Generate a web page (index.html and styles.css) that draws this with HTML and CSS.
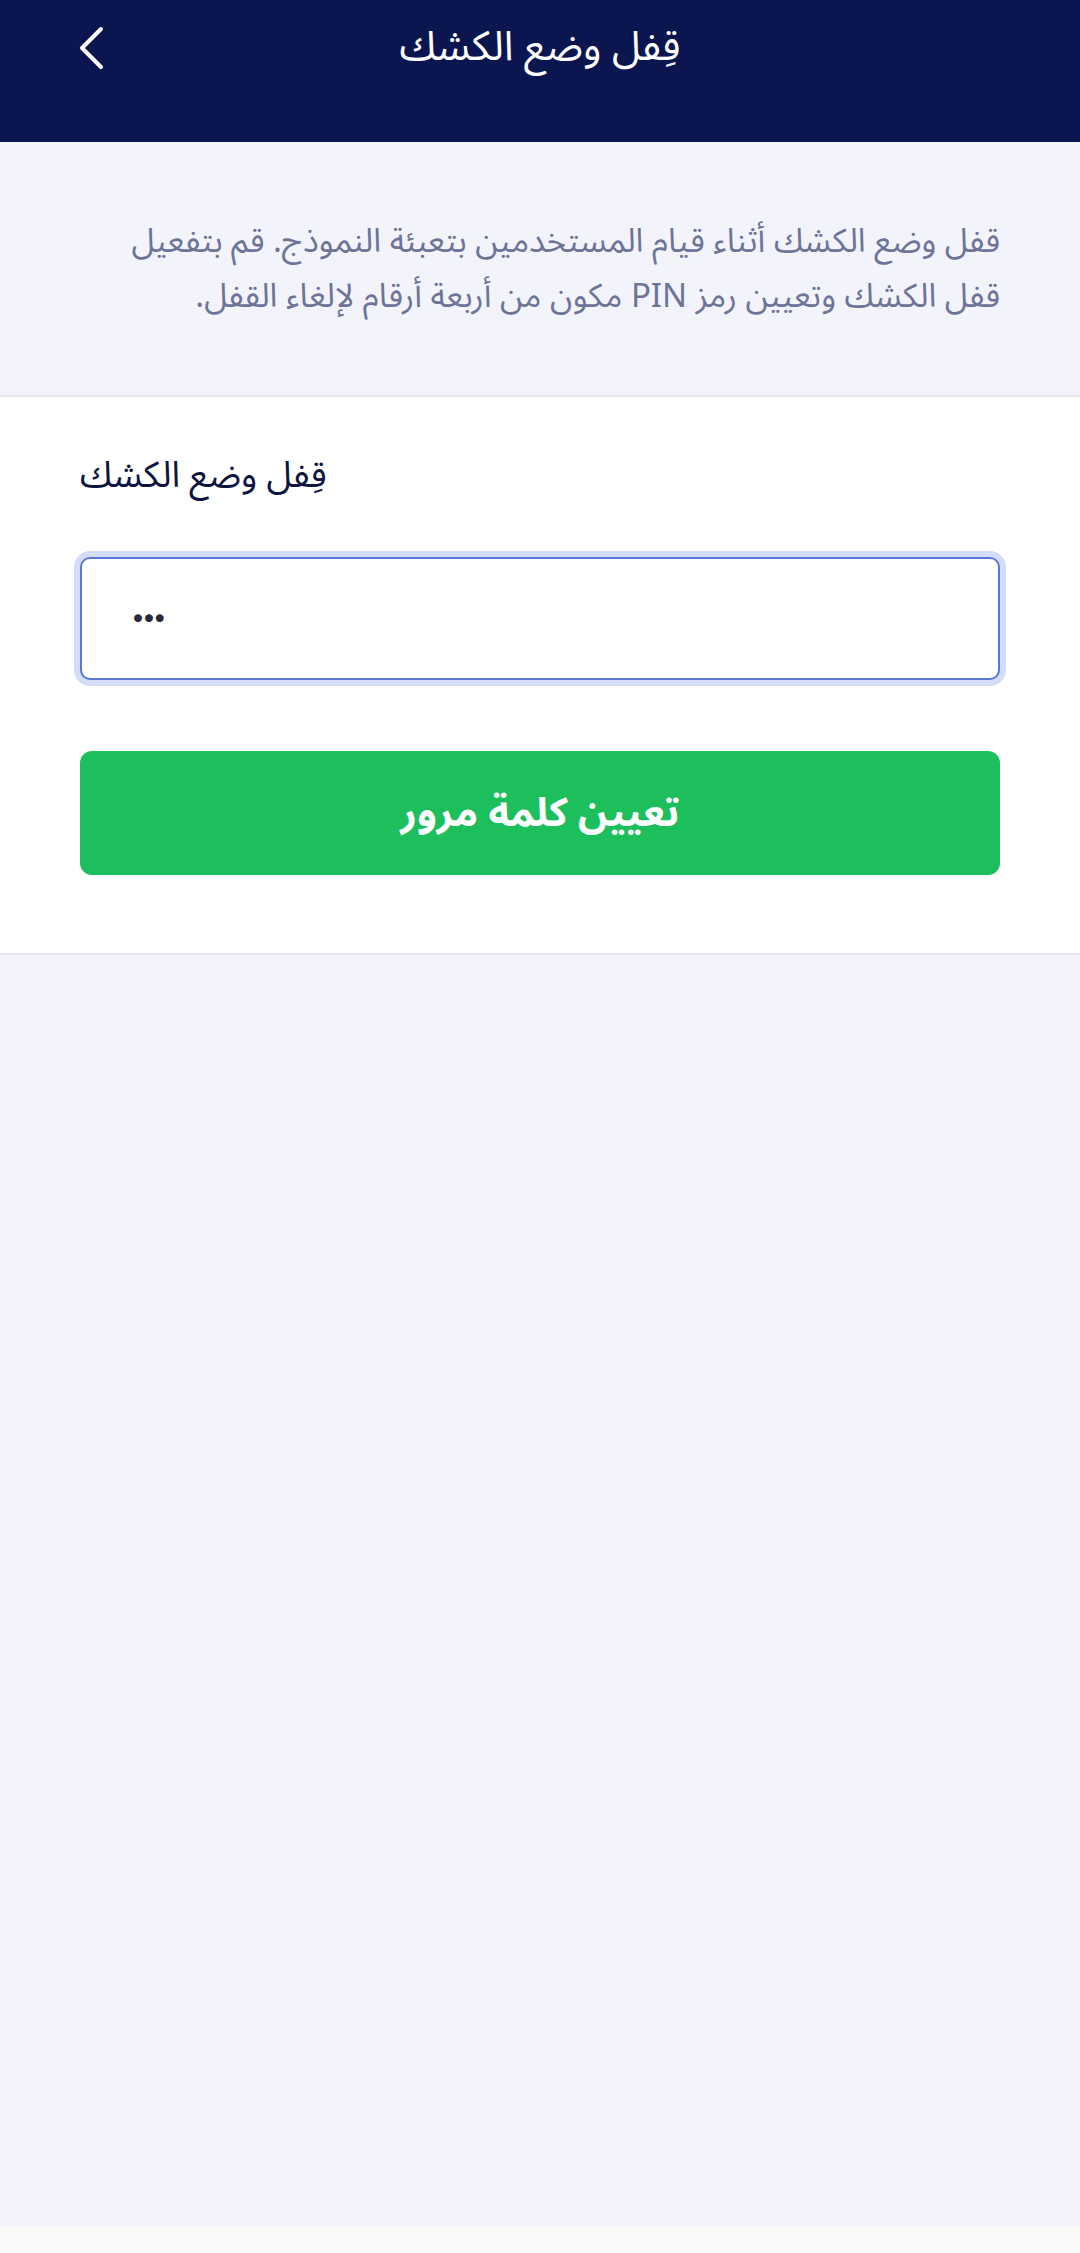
FILE: index.html
```html
<!DOCTYPE html>
<html lang="ar">
<head>
    <meta charset="UTF-8">
    <meta name="viewport" content="width=device-width, initial-scale=1.0">
    <title>قِفل وضع الكشك</title>
    <link rel="stylesheet" href="styles.css">
</head>
<body>
    <div class="screen">
        <!-- Top bar -->
        <header class="topbar">
            <div class="topbar-row">
                <button class="back" type="button" aria-label="رجوع">
                    <svg width="28" height="46" viewBox="0 0 28 46">
                        <polyline points="23,4 4,23 23,42" fill="none" stroke="#ffffff" stroke-width="4" stroke-linecap="round" stroke-linejoin="round"/>
                    </svg>
                </button>
                <h1 class="title">قِفل وضع الكشك</h1>
                <span></span>
            </div>
        </header>

        <!-- Explanation -->
        <section class="intro">
            <p class="intro-text" dir="rtl">قفل وضع الكشك أثناء قيام المستخدمين بتعبئة النموذج. قم بتفعيل<br>قفل الكشك وتعيين رمز PIN مكون من أربعة أرقام لإلغاء القفل.</p>
        </section>

        <!-- PIN form -->
        <form class="card">
            <label class="field-label" for="pin">قِفل وضع الكشك</label>
            <input class="pin-input" id="pin" type="password" value="123" inputmode="numeric">
            <button class="submit" type="submit">تعيين كلمة مرور</button>
        </form>

        <div class="filler"></div>
        <div class="navbar"></div>
    </div>
</body>
</html>
```

FILE: styles.css
```css
html, body {
    height: 100%;
    margin: 0;
}

body {
    font-family: "Noto Sans Arabic", "Noto Sans", "DejaVu Sans", sans-serif;
    background-color: #f2f3fb;
}

.screen {
    display: flex;
    flex-direction: column;
    min-height: 100%;
}

/* Header */
.topbar {
    background-color: #0b1651;
    height: 142px;
}

.topbar-row {
    display: grid;
    grid-template-columns: 1fr auto 1fr;
    align-items: center;
    height: 96px;
    padding: 0 78px;
}

.back {
    justify-self: start;
    display: flex;
    padding: 0;
    border: none;
    background: none;
    cursor: pointer;
}

.title {
    margin: 0;
    color: #ffffff;
    font-weight: 400;
    font-size: 41px;
    line-height: 1.2;
}

/* Explanation block */
.intro {
    padding: 72px 80px 71px;
    border-bottom: 2px solid #e6e6ee;
}

.intro-text {
    margin: 0;
    text-align: right;
    color: #6e7398;
    font-size: 33px;
    line-height: 55px;
}

/* Form card */
.card {
    display: flex;
    flex-direction: column;
    background-color: #ffffff;
    padding: 55px 80px 78px;
    border-bottom: 2px solid #e6e6ee;
}

.field-label {
    color: #0d1440;
    font-size: 36px;
    line-height: 48px;
}

.pin-input {
    margin-top: 57px;
    height: 123px;
    box-sizing: border-box;
    padding: 0 48px;
    border: 2px solid #5a78d6;
    border-radius: 10px;
    box-shadow: 0 0 0 6px #d3ddf8;
    outline: none;
    font-family: "DejaVu Sans", sans-serif;
    font-size: 27px;
    letter-spacing: -5px;
    color: #272a3a;
}

.submit {
    margin-top: 71px;
    height: 124px;
    border: none;
    border-radius: 12px;
    background-color: #1dbf5d;
    color: #ffffff;
    font-family: inherit;
    font-weight: 700;
    font-size: 40px;
    cursor: pointer;
}

.filler {
    flex: 1;
}

.navbar {
    height: 27px;
    background-color: #fafafa;
}
```
